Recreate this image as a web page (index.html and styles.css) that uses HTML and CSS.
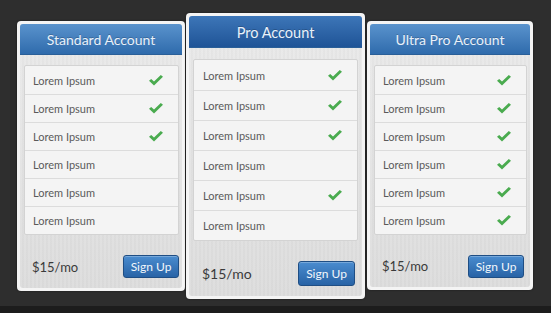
FILE: index.html
```html
<!DOCTYPE html>
<html lang="en">
<head>
  <meta charset="UTF-8" />
  <title>Pricing Tables</title>
  <link rel="stylesheet" href="styles.css">
</head>
<body>

  <div class="stage">

    <!-- Standard -->
    <div class="plan">
      <div class="plan-inner">
        <h2 class="plan-title">Standard Account</h2>
        <ul class="features">
          <li>Lorem Ipsum <span class="check"></span></li>
          <li>Lorem Ipsum <span class="check"></span></li>
          <li>Lorem Ipsum <span class="check"></span></li>
          <li>Lorem Ipsum</li>
          <li>Lorem Ipsum</li>
          <li>Lorem Ipsum</li>
        </ul>
        <div class="plan-foot">
          <span class="price">$15/mo</span>
          <button class="signup">Sign Up</button>
        </div>
      </div>
    </div>

    <!-- Pro (featured) -->
    <div class="plan featured">
      <div class="plan-inner">
        <h2 class="plan-title">Pro Account</h2>
        <ul class="features">
          <li>Lorem Ipsum <span class="check"></span></li>
          <li>Lorem Ipsum <span class="check"></span></li>
          <li>Lorem Ipsum <span class="check"></span></li>
          <li>Lorem Ipsum</li>
          <li>Lorem Ipsum <span class="check"></span></li>
          <li>Lorem Ipsum</li>
        </ul>
        <div class="plan-foot">
          <span class="price">$15/mo</span>
          <button class="signup">Sign Up</button>
        </div>
      </div>
    </div>

    <!-- Ultra Pro -->
    <div class="plan ultra">
      <div class="plan-inner">
        <h2 class="plan-title">Ultra Pro Account</h2>
        <ul class="features">
          <li>Lorem Ipsum <span class="check"></span></li>
          <li>Lorem Ipsum <span class="check"></span></li>
          <li>Lorem Ipsum <span class="check"></span></li>
          <li>Lorem Ipsum <span class="check"></span></li>
          <li>Lorem Ipsum <span class="check"></span></li>
          <li>Lorem Ipsum <span class="check"></span></li>
        </ul>
        <div class="plan-foot">
          <span class="price">$15/mo</span>
          <button class="signup">Sign Up</button>
        </div>
      </div>
    </div>

  </div>

  <script>
    // same checkmark svg in every marked row
    const tick = '<svg width="14" height="11" viewBox="0 0 14 11"><polygon points="0,5.8 2.2,3.9 5,6.4 11.8,0 14,1.8 5,10.6" fill="#4aab4f"/></svg>';
    document.querySelectorAll('.check').forEach(el => el.innerHTML = tick);
  </script>
</body>
</html>
```

FILE: styles.css
```css
* {
  box-sizing: border-box;
  margin: 0;
  padding: 0;
}

body {
  background: #1d1d1d;
  font-family: 'Lato', 'Open Sans', sans-serif;
}

.stage {
  height: 306px;
  background: #2e2e2e;
  display: flex;
  align-items: flex-start;
  padding: 21px 0 0 17px;
  gap: 1px;
}

.plan {
  width: 168px;
  height: 270px;
  padding: 3px;
  background: #f4f4f4;
  border-radius: 4px;
  box-shadow: 0 0 2px rgba(0, 0, 0, 0.5);
}

.plan-inner {
  height: 100%;
  display: flex;
  flex-direction: column;
  border-radius: 3px;
  background: repeating-linear-gradient(90deg, rgba(255,255,255,0.07) 0 2px, rgba(0,0,0,0.01) 2px 4px),
              linear-gradient(#e9e9e9, #dcdcdc);
}

.plan-title {
  height: 31px;
  line-height: 31px;
  text-align: center;
  font-size: 14px;
  font-weight: normal;
  color: #e9f1fa;
  text-shadow: 0 -1px 0 rgba(0, 0, 0, 0.2);
  background: linear-gradient(#5a93cd, #2f6bac);
  border-radius: 3px 3px 0 0;
  border-bottom: 1px solid #2a5f98;
}

.features {
  list-style: none;
  margin: 10px 3px 0 4px;
  background: #f4f4f4;
  border: 1px solid #d3d3d3;
  border-radius: 2px;
}

.features li {
  height: 28px;
  display: flex;
  align-items: center;
  justify-content: space-between;
  padding: 0 15px 0 8px;
  font-size: 11px;
  color: #5a5a5a;
  border-top: 1px solid #dcdcdc;
}

.features li:first-child {
  border-top: none;
}

.check {
  display: flex;
}

.plan-foot {
  flex: 1;
  display: flex;
  align-items: center;
  justify-content: space-between;
  padding: 10px 3px 0 12px;
}

.price {
  font-size: 13px;
  color: #3a3a3a;
}

.signup {
  width: 56px;
  height: 23px;
  font-family: inherit;
  font-size: 12px;
  color: #f2f7fc;
  background: linear-gradient(#4a8ccf, #2863a6);
  border: 1px solid #1f4e84;
  border-radius: 3px;
  box-shadow: inset 0 1px 0 rgba(255, 255, 255, 0.25);
  cursor: pointer;
}

/* middle card is taller */
.plan.featured {
  width: 179px;
  height: 286px;
  margin-top: -8px;
}

.featured .plan-title {
  height: 32px;
  line-height: 33px;
  font-size: 14.5px;
  background: linear-gradient(#3d76b8, #1f5497);
}

.featured .features {
  margin: 11px 4px 0 4px;
}

.featured .features li {
  height: 30px;
  padding-left: 9px;
}

.featured .plan-foot {
  padding: 10px 7px 0 13px;
}

.featured .price {
  font-size: 14px;
}

.featured .signup {
  width: 57px;
  height: 25px;
}

.plan.ultra {
  width: 166px;
  height: 269px;
  margin-left: 1px;
}

.ultra .plan-foot {
  padding-right: 6px;
}
```
